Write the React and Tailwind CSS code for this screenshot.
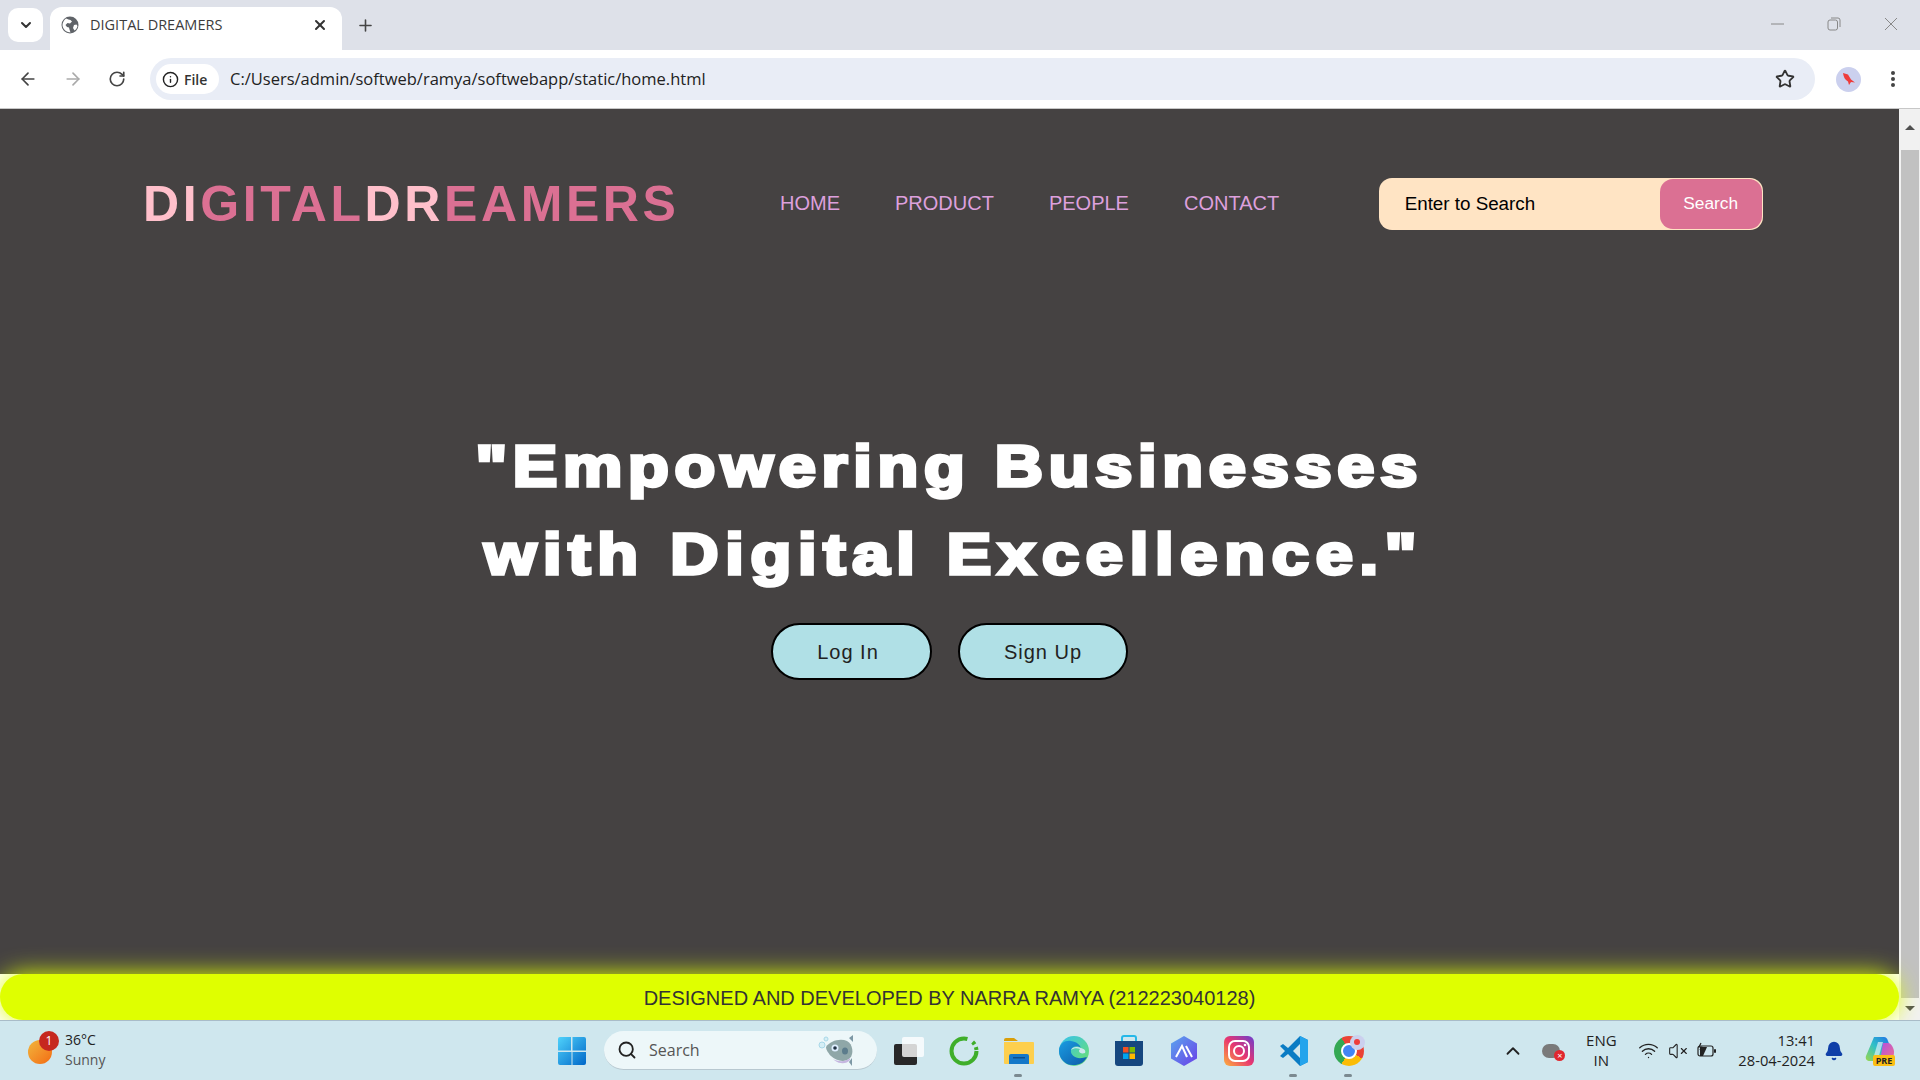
import { ArrowLeft, ArrowRight, RotateCw, Star, Info, Plus, X, ChevronDown, ChevronUp, Search, Bell, Wifi, VolumeX } from "lucide-react";

const segoe = { fontFamily: '"Open Sans", "Noto Sans", sans-serif' };

function Globe() {
  return (
    <svg width="18" height="18" viewBox="0 0 18 18">
      <circle cx="9" cy="9" r="8.500" fill="#5f6368" />
      <path d="M5 2.500c2 .5 3 1.500 4.500 1.500L11 5.500 9 7.500 6.500 7 4.500 9 6 11l2 .5.500 2 1 3L7 16C4 15 1.500 12 1.500 9c0-2.500 1.500-5 3.500-6.500zM13 9l2.500-.5 1 1.500c-.5 2-1.500 3.500-3 4.500L12 12z" fill="#fff" />
    </svg>
  );
}

function TabStrip() {
  return (
    <div className="h-[50px] bg-[#dee1e9] flex items-end pl-[8px] shrink-0">
      <div className="w-[35px] h-[34px] mb-[8px] bg-white rounded-[10px] flex items-center justify-center">
        <ChevronDown size={16} strokeWidth={3} color="#333" />
      </div>
      <div className="ml-[7px] w-[292px] h-[43px] bg-white rounded-t-[12px] flex items-center pl-[11px] pr-[14px] pb-[7px]">
        <Globe />
        <span className="ml-[11px] text-[14.500px] text-[#3c3c3c]" style={segoe}>DIGITAL DREAMERS</span>
        <X className="ml-auto" size={16} strokeWidth={3} color="#333" />
      </div>
      <Plus className="ml-[14px] mb-[15px]" size={19} strokeWidth={2} color="#444" />
      <div className="ml-auto flex items-center h-full pr-px pb-[2px]">
        <div className="w-[56px] mr-px flex justify-center">
          <svg width="13" height="2" viewBox="0 0 13 2"><path d="M0 1h13" stroke="#888" /></svg>
        </div>
        <div className="w-[56px] mr-px flex justify-center">
          <svg width="14" height="14" viewBox="0 0 14 14" fill="none" stroke="#888" strokeWidth="1">
            <rect x="1" y="3" width="9.500" height="10" rx="2" />
            <path d="M4 1h7a2 2 0 0 1 2 2v7" />
          </svg>
        </div>
        <div className="w-[56px] flex justify-center">
          <svg width="14" height="14" viewBox="0 0 14 14"><path d="M1 1l12 12M13 1L1 13" stroke="#888" /></svg>
        </div>
      </div>
    </div>
  );
}

function Toolbar() {
  return (
    <div className="h-[59px] bg-white border-b border-[#c7c7c7] flex items-center pl-[18px] rounded-t-[10px] shrink-0">
      <ArrowLeft size={20} strokeWidth={2} color="#444" />
      <ArrowRight className="ml-[25px]" size={20} strokeWidth={2} color="#aaa" />
      <RotateCw className="ml-[25px]" size={18} strokeWidth={2.200} color="#444" />
      <div className="ml-[24px] w-[1665px] h-[42px] rounded-full bg-[#e9edf6] flex items-center pl-[6px] pr-[20px]">
        <div className="h-[30px] w-[63px] rounded-full bg-white flex items-center pl-[6px] gap-[5px]">
          <Info size={17} strokeWidth={2} color="#222" />
          <span className="text-[14px] font-semibold text-[#333]" style={segoe}>File</span>
        </div>
        <span className="ml-[11px] mt-px text-[16.500px] text-[#222]" style={segoe}>C:/Users/admin/softweb/ramya/softwebapp/static/home.html</span>
        <Star className="ml-auto" size={20} strokeWidth={2.200} color="#333" />
      </div>
      <div className="ml-[21px] w-[25px] h-[25px] rounded-full bg-[#cbd0ee] flex items-center justify-center">
        <svg width="14" height="14" viewBox="0 0 14 14">
          <path d="M1 1l5 1.500 3 5 4 3-4-.5-2 3-1-3.500C3 8 1.500 5 1 1z" fill="#ee3b3b" />
        </svg>
      </div>
      <div className="ml-[30px] flex flex-col gap-[2px]">
        <span className="w-[4px] h-[4px] rounded-full bg-[#444]" />
        <span className="w-[4px] h-[4px] rounded-full bg-[#444]" />
        <span className="w-[4px] h-[4px] rounded-full bg-[#444]" />
      </div>
    </div>
  );
}

function Logo() {
  const light = "text-[#ffc0cb]";
  const letters = [
    ["D", light], ["I", light], ["G"], ["I"], ["T"], ["A"], ["L"],
    ["D", light], ["R", light], ["E"], ["A"], ["M"], ["E"], ["R"], ["S"],
  ];
  return (
    <div className="mt-px text-[50px] leading-none font-bold tracking-[3.600px] text-[#db7093]">
      {letters.map(([ch, cls], i) => (
        <span key={i} className={cls}>{ch}</span>
      ))}
    </div>
  );
}

function Header() {
  return (
    <header className="h-[188px] flex items-center pl-[143px] shrink-0">
      <Logo />
      <nav className="ml-[100.500px] flex gap-[55px] text-[20px] text-[#dda0dd]">
        <a>HOME</a>
        <a>PRODUCT</a>
        <a>PEOPLE</a>
        <a>CONTACT</a>
      </nav>
      <div className="ml-[99.500px] mt-[2px] w-[384px] h-[52px] bg-[#ffe4c4] rounded-[13px] flex items-center p-px">
        <span className="ml-[25px] text-[18.800px] text-black">Enter to Search</span>
        <button className="ml-auto h-full w-[102px] bg-[#db7093] rounded-[13px] text-white text-[17.300px]">Search</button>
      </div>
    </header>
  );
}

function Hero() {
  return (
    <main className="flex-1 flex flex-col items-center pt-[125px]">
      <h1 className="scale-x-[1.15] text-center text-white text-[58px] leading-[88px] font-bold tracking-[5px] [-webkit-text-stroke:3.500px_white]">
        <span className="block">"Empowering Businesses</span>
        <span className="block pl-[8px] tracking-[5.900px]">with Digital Excellence."</span>
      </h1>
      <div className="mt-[25px] flex gap-[26px] text-[20px] tracking-[1px] text-[#222]">
        <button className="w-[161px] h-[57px] pt-px pr-[7px] bg-[#b0e0e6] border-2 border-black rounded-full">Log In</button>
        <button className="w-[170px] h-[57px] pt-px bg-[#b0e0e6] border-2 border-black rounded-full">Sign Up</button>
      </div>
    </main>
  );
}

function Scrollbar() {
  return (
    <div className="w-[21px] bg-[#f1f1f1] flex flex-col items-center shrink-0">
      <div className="h-[41px] pt-[16px]">
        <div className="w-0 h-0 border-x-[5px] border-x-transparent border-b-[5px] border-b-[#505050]" />
      </div>
      <div className="w-[18px] flex-1 bg-[#c1c1c1]" />
      <div className="h-[22px] pt-[8px]">
        <div className="w-0 h-0 border-x-[5px] border-x-transparent border-t-[5px] border-t-[#505050]" />
      </div>
    </div>
  );
}

function Page() {
  return (
    <div className="flex-1 flex min-h-0" style={{ fontFamily: '"Liberation Sans", Arial, sans-serif' }}>
      <div className="flex-1 flex flex-col bg-white">
        <div className="flex-1 flex flex-col bg-[#454242]">
          <Header />
          <Hero />
        </div>
        <footer className="relative h-[46px] pt-px bg-[#dfff00] rounded-[23px] shadow-[0_0_25px_#dfff00] flex items-center justify-center text-[20px] text-[#333]">
          DESIGNED AND DEVELOPED BY NARRA RAMYA (212223040128)
        </footer>
      </div>
      <Scrollbar />
    </div>
  );
}

function WinLogo() {
  return (
    <svg width="30" height="30" viewBox="0 0 30 30">
      <defs>
        <linearGradient id="w" x1="0" y1="0" x2="1" y2="1">
          <stop offset="0" stopColor="#4fd2fb" />
          <stop offset="1" stopColor="#0067c8" />
        </linearGradient>
      </defs>
      <path d="M1 3a2 2 0 0 1 2-2h11v13.500H1zM15.500 1H27a2 2 0 0 1 2 2v11.500H15.500zM1 16h13.500v13H3a2 2 0 0 1-2-2zM15.500 16H29v11a2 2 0 0 1-2 2H15.500z" fill="url(#w)" />
    </svg>
  );
}

function Fish() {
  return (
    <svg width="44" height="36" viewBox="0 0 44 36">
      <circle cx="5" cy="13" r="3" fill="#d5eef5" stroke="#a8d8e8" />
      <circle cx="9" cy="7" r="2" fill="#d5eef5" stroke="#a8d8e8" />
      <path d="M32 6l4-3v7zM32 30l3 4v-8z" fill="#7d98a5" />
      <path d="M9 15c4-6 14-9 21-6 6 3 7 13 3 17-5 5-14 3-19-2-2-2-5-6-5-9z" fill="#8fa7a8" />
      <path d="M16 27c5 3 13 3 17-1 1 3-4 6-9 5-3 0-6-2-8-4z" fill="#c5b6e0" />
      <circle cx="18" cy="16" r="3.500" fill="#dfefff" />
      <circle cx="18" cy="16" r="1.800" fill="#234" />
      <ellipse cx="28" cy="19" rx="3" ry="3.500" fill="#5c7c8c" />
    </svg>
  );
}

function Spinner() {
  return (
    <svg width="32" height="32" viewBox="0 0 32 32" fill="none">
      <circle cx="16" cy="16" r="12.500" stroke="#3fae2a" strokeWidth="4" strokeDasharray="62 6 3 3 3 3" />
    </svg>
  );
}

function Folder() {
  return (
    <svg width="32" height="30" viewBox="0 0 32 30">
      <path d="M1 4a2 2 0 0 1 2-2h8l4 3h-14z" fill="#d99e08" />
      <path d="M1 6h29a1 1 0 0 1 1 1v20a1 1 0 0 1-1 1H2a1 1 0 0 1-1-1z" fill="#fdcf4d" />
      <path d="M6 20a2 2 0 0 1 2-2h16a2 2 0 0 1 2 2v8H6z" fill="#1478c8" />
      <rect x="10" y="21" width="12" height="1.500" fill="#0c4f8a" />
    </svg>
  );
}

function Edge() {
  return (
    <svg width="32" height="32" viewBox="0 0 32 32">
      <defs>
        <linearGradient id="e1" x1="0" y1="0" x2="1" y2="1">
          <stop offset="0" stopColor="#35c1f1" />
          <stop offset="1" stopColor="#6ee26a" />
        </linearGradient>
        <linearGradient id="e2" x1="0" y1="0" x2="1" y2="1">
          <stop offset="0" stopColor="#1b9de2" />
          <stop offset="1" stopColor="#0c5aa8" />
        </linearGradient>
      </defs>
      <circle cx="16" cy="16" r="15" fill="url(#e1)" />
      <path d="M1 16C1 8 8 5 13 6c6 1 9 4 10 7-3-3-9-2-10 2-1 5 5 9 11 8l5-1c-3 6-8 8-13 8C8 31 1 24 1 16z" fill="url(#e2)" />
      <path d="M13 15c1-3 6-4 10-2 4 1 5 3 4 5-3 1-6 0-6-2 0-1 1-2 1-2-3-1-6-1-9 1z" fill="#cfe7ee" />
    </svg>
  );
}

function Store() {
  return (
    <svg width="30" height="32" viewBox="0 0 30 32">
      <path d="M8 6V3a2 2 0 0 1 2-2h10a2 2 0 0 1 2 2v3" fill="none" stroke="#26b8e8" strokeWidth="2" />
      <path d="M1 6h28v22a3 3 0 0 1-3 3H4a3 3 0 0 1-3-3z" fill="#16477f" />
      <rect x="9" y="12" width="5.500" height="5.500" fill="#f25022" />
      <rect x="15.500" y="12" width="5.500" height="5.500" fill="#7fba00" />
      <rect x="9" y="18.500" width="5.500" height="5.500" fill="#00a4ef" />
      <rect x="15.500" y="18.500" width="5.500" height="5.500" fill="#ffb900" />
    </svg>
  );
}

function Hex() {
  return (
    <svg width="30" height="32" viewBox="0 0 30 32">
      <defs>
        <linearGradient id="h" x1="0" y1="0" x2="1" y2="1">
          <stop offset="0" stopColor="#5aa6ee" />
          <stop offset="1" stopColor="#6a3fe8" />
        </linearGradient>
      </defs>
      <path d="M15 1l13 7.500v15L15 31 2 23.500v-15z" fill="url(#h)" />
      <path d="M7 22l6-11 5 11M17 11l6 11" fill="none" stroke="#fff" strokeWidth="2" />
    </svg>
  );
}

function Insta() {
  return (
    <svg width="30" height="30" viewBox="0 0 30 30">
      <defs>
        <linearGradient id="i" x1="0" y1="1" x2="1" y2="0">
          <stop offset="0" stopColor="#fdb13c" />
          <stop offset="0.5" stopColor="#e8366f" />
          <stop offset="1" stopColor="#6a3fd0" />
        </linearGradient>
      </defs>
      <rect width="30" height="30" rx="6" fill="url(#i)" />
      <rect x="5" y="5" width="20" height="20" rx="6" fill="none" stroke="#fff" strokeWidth="2" />
      <circle cx="15" cy="15" r="5" fill="none" stroke="#fff" strokeWidth="2" />
      <circle cx="21" cy="9" r="1.300" fill="#fff" />
    </svg>
  );
}

function VSCode() {
  return (
    <svg width="30" height="30" viewBox="0 0 30 30">
      <path d="M21 0l8 4v22l-8 4-12-12-5 4-3-2 5-5-5-5 3-2 5 4z" fill="#0a7cc4" />
      <path d="M21 0l8 4v22l-8 4z" fill="#25a4ec" />
      <path d="M21 8l-7 7 7 7z" fill="#cfe7ee" />
    </svg>
  );
}

function Chrome() {
  return (
    <div className="relative w-[30px] h-[30px]">
      <div className="w-full h-full rounded-full bg-[conic-gradient(#ea4335_0deg_120deg,#fbbc05_120deg_210deg,#34a853_210deg_330deg,#ea4335_330deg)] flex items-center justify-center">
        <div className="w-[16px] h-[16px] rounded-full bg-[#4285f4] border-2 border-white" />
      </div>
      <div className="absolute -top-[1px] -right-[1px] w-[15px] h-[15px] rounded-full bg-[#cbd0ee] flex items-center justify-center">
        <div className="w-[6px] h-[6px] bg-[#ee3b3b] rounded-sm" />
      </div>
    </div>
  );
}

function Battery() {
  return (
    <svg width="20" height="18" viewBox="0 0 20 18" fill="none">
      <rect x="1" y="4" width="15" height="10" rx="2" stroke="#222" strokeWidth="1.200" />
      <rect x="17" y="7" width="2" height="4" rx="1" fill="#222" />
      <path d="M3 14V5h7l-4 9z" fill="#222" />
      <path d="M4 1L2 5h2.500L3 8" stroke="#222" strokeWidth="1.200" />
    </svg>
  );
}

function Copilot() {
  return (
    <div className="relative w-[30px] h-[30px]">
      <svg width="30" height="26" viewBox="0 0 30 26">
        <defs>
          <linearGradient id="c1" x1="0" y1="1" x2="1" y2="0">
            <stop offset="0" stopColor="#9bd84a" />
            <stop offset="0.5" stopColor="#2fc0c8" />
            <stop offset="1" stopColor="#1f6fe8" />
          </linearGradient>
          <linearGradient id="c2" x1="0" y1="0" x2="1" y2="1">
            <stop offset="0" stopColor="#b050e0" />
            <stop offset="1" stopColor="#f07090" />
          </linearGradient>
        </defs>
        <path d="M9 1h10c2 0 3 1 4 4l2 5-9 15H5c-3 0-5-2-4-5z" fill="url(#c1)" />
        <path d="M18 7h5c3 0 6 5 6 9 0 5-2 9-6 9h-8z" fill="url(#c2)" />
        <path d="M13 6h5l-5 17H8z" fill="#eaf6fb" opacity="0.650" />
      </svg>
      <span className="absolute bottom-0 right-0 w-[22px] h-[11px] bg-[#fbbf14] rounded-[2px] text-[9px] leading-[11px] text-center font-bold text-[#222]">PRE</span>
    </div>
  );
}

function Pin({ children, open }) {
  return (
    <div className="relative w-[55px] h-[60px] flex items-center justify-center">
      {children}
      {open && <span className="absolute bottom-[4px] left-[23px] w-[8px] h-[3px] rounded-full bg-[#7b8a90]" />}
    </div>
  );
}

function Taskbar() {
  return (
    <div className="h-[60px] bg-[#cfe7ee] border-t border-[#a9bcc8] flex items-center shrink-0 relative" style={segoe}>
      <div className="w-[551px] flex items-center pl-[28px]">
        <div className="relative w-[24px] h-[24px] mt-[3px] rounded-full bg-gradient-to-br from-[#f0b53c] to-[#f26a10]">
          <span className="absolute -top-[9px] left-[11px] w-[20px] h-[20px] rounded-full bg-[#c6281f] text-white text-[12px] flex items-center justify-center">1</span>
        </div>
        <div className="ml-[13px] -mt-[2px] text-[14px] leading-[20px]">
          <div className="text-[#222]">36°C</div>
          <div className="text-[#555]">Sunny</div>
        </div>
      </div>
      <div className="w-[42px] flex justify-center"><WinLogo /></div>
      <div className="ml-[11px] w-[273px] h-[39px] bg-[#edf7f9] rounded-full border-b border-[#b8c8d0] flex items-center pl-[13px] pr-[16px]">
        <Search size={20} strokeWidth={2.200} color="#222" />
        <span className="ml-[12px] text-[16px] text-[#555]">Search</span>
        <div className="ml-auto"><Fish /></div>
      </div>
      <div className="ml-[4px] flex">
        <Pin>
          <div className="relative w-[30px] h-[28px]">
            <div className="absolute left-0 bottom-0 w-[23px] h-[21px] rounded-[2px] bg-[#282828]" />
            <div className="absolute right-0 top-0 w-[22px] h-[20px] rounded-[2px] bg-white/80" />
          </div>
        </Pin>
        <Pin><Spinner /></Pin>
        <Pin open><Folder /></Pin>
        <Pin><Edge /></Pin>
        <Pin><Store /></Pin>
        <Pin><Hex /></Pin>
        <Pin><Insta /></Pin>
        <Pin open><VSCode /></Pin>
        <Pin open><Chrome /></Pin>
      </div>
      <div className="ml-auto flex items-center text-[#222]">
        <ChevronUp size={22} strokeWidth={2} color="#222" />
        <div className="ml-[18px] relative">
          <div className="w-[18px] h-[14px] rounded-full bg-[#7a7a7a]" />
          <span className="absolute -bottom-[3px] -right-[5px] w-[11px] h-[11px] rounded-full bg-[#e0272f] text-white text-[9px] leading-[11px] text-center">×</span>
        </div>
        <div className="ml-[24px] -mt-[2px] w-[34px] text-center text-[15px] leading-[20px]">ENG<br />IN</div>
        <Wifi className="ml-[20px]" size={21} strokeWidth={1.500} color="#222" />
        <VolumeX className="ml-[9px]" size={20} strokeWidth={1.300} color="#222" />
        <div className="ml-[9px]"><Battery /></div>
        <div className="ml-[21px] -mt-[2px] text-right text-[14.700px] leading-[20px] whitespace-nowrap">13:41<br />28-04-2024</div>
        <Bell className="ml-[9px]" size={20} fill="#0f3fa8" color="#0f3fa8" />
        <div className="ml-[21px] mr-[25px]"><Copilot /></div>
      </div>
    </div>
  );
}

export default function App() {
  return (
    <div className="w-[1920px] h-[1080px] flex flex-col overflow-hidden">
      <TabStrip />
      <Toolbar />
      <Page />
      <Taskbar />
    </div>
  );
}
